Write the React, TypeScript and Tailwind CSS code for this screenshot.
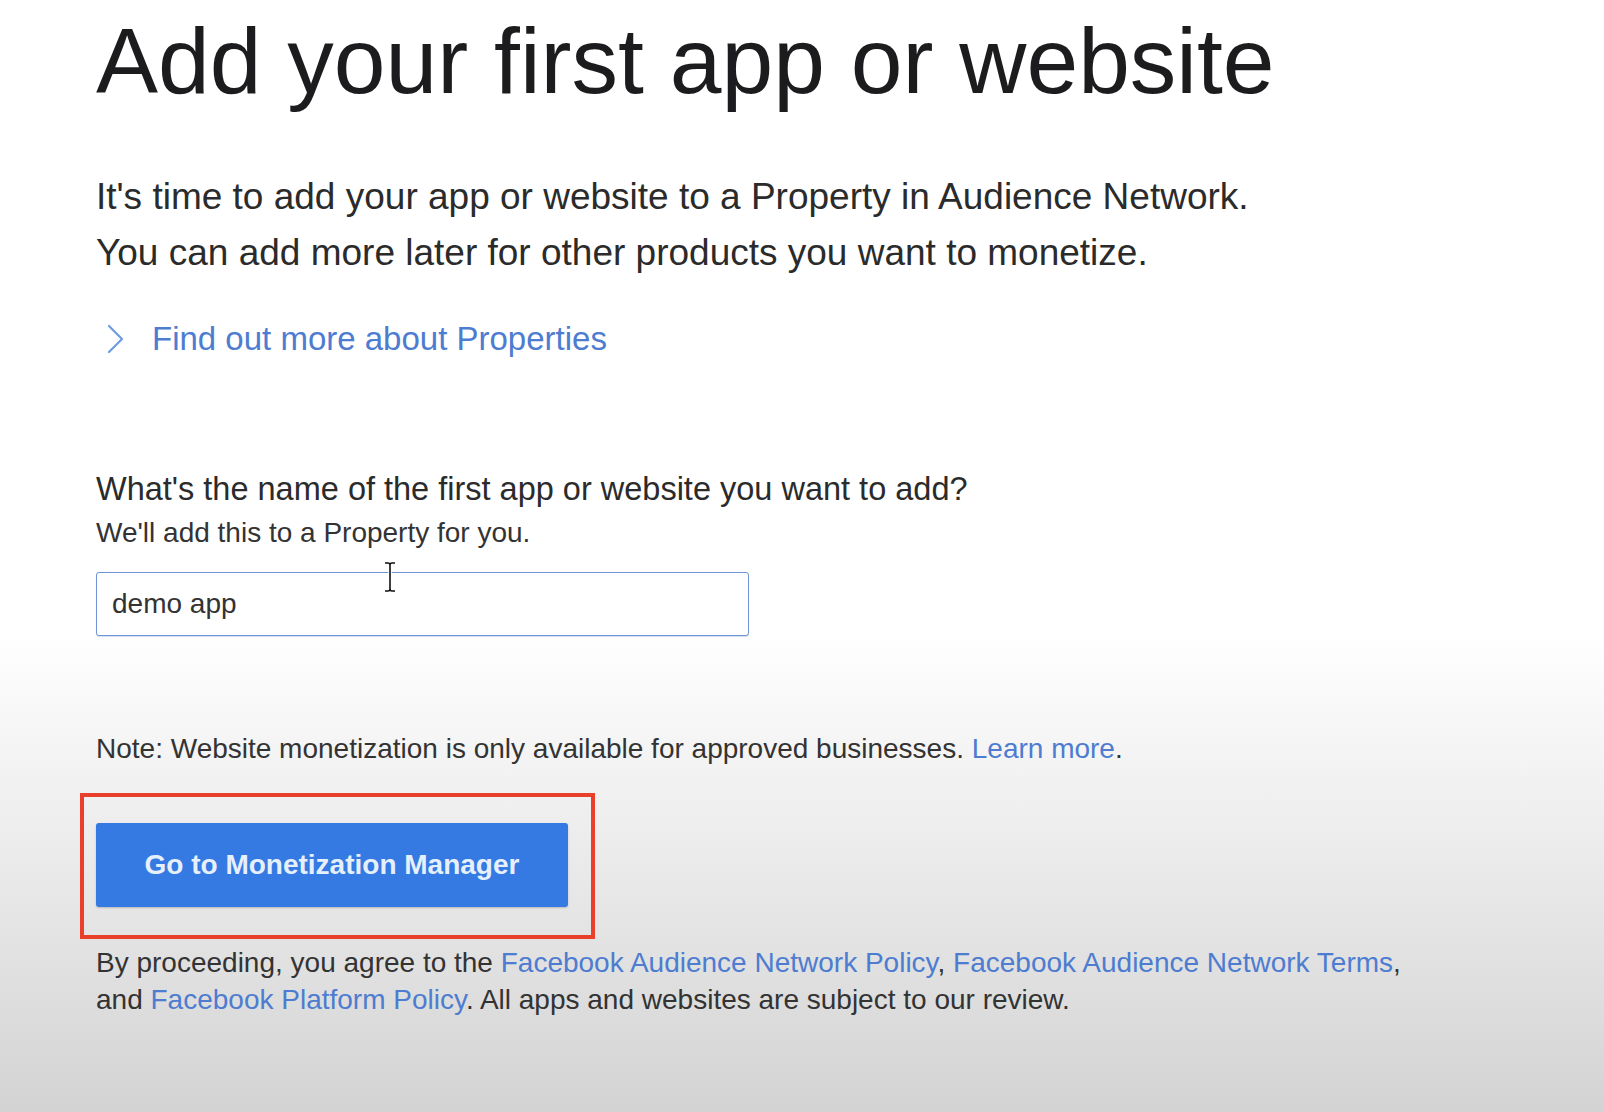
import React from "react";

const font = { fontFamily: '"Liberation Sans", Arial, sans-serif' };

export default function App() {
  return (
    <div
      className="w-full min-h-[1112px] bg-[linear-gradient(to_bottom,#ffffff_0%,#ffffff_57%,#d3d3d3_100%)] text-[#1d1d1f]"
      style={font}
    >
      <div className="pl-[96px] pt-[15px] flex flex-col items-start">
        <h1 className="text-[93px] leading-[93px] font-normal text-[#1c1c1e] whitespace-nowrap">
          Add your first app or website
        </h1>

        <p className="mt-[61px] text-[37px] leading-[56px] text-[#2b2b2b] whitespace-nowrap">
          It's time to add your app or website to a Property in Audience Network.
          <br />
          You can add more later for other products you want to monetize.
        </p>

        <a className="mt-[38px] flex items-center text-[33px] leading-[40px] text-[#4d7cd0] cursor-pointer">
          <svg
            width="18"
            height="30"
            viewBox="0 0 18 30"
            className="ml-[11px] mr-[27px]"
            fill="none"
          >
            <polyline
              points="2,2 15,15 2,28"
              stroke="#6e9ae0"
              strokeWidth="2.2"
              strokeLinecap="round"
              strokeLinejoin="round"
            />
          </svg>
          <span>Find out more about Properties</span>
        </a>

        <div className="mt-[110px] text-[32.5px] leading-[40px] text-[#2b2b2b] whitespace-nowrap">
          What's the name of the first app or website you want to add?
        </div>
        <div className="mt-[6px] text-[28px] leading-[36px] text-[#333333] whitespace-nowrap">
          We'll add this to a Property for you.
        </div>

        <div className="relative mt-[21px]">
          <div className="w-[653px] h-[64px] border border-[#6f95d6] rounded-[3px] bg-white pl-[15px] flex items-center shadow-[0_1px_1px_rgba(80,120,200,0.25)]">
            <span className="text-[28px] leading-[36px] text-[#333333]">demo app</span>
          </div>
          <svg
            width="14"
            height="32"
            viewBox="0 0 14 32"
            className="absolute left-[287px] top-[-11px]"
            fill="none"
          >
            <path
              d="M2 2 H5 Q7 2 7 4 Q7 2 9 2 H12 M7 4 V28 M2 30 H5 Q7 30 7 28 Q7 30 9 30 H12"
              stroke="#ffffff"
              strokeWidth="3.5"
            />
            <path
              d="M2 2 H5 Q7 2 7 4 Q7 2 9 2 H12 M7 4 V28 M2 30 H5 Q7 30 7 28 Q7 30 9 30 H12"
              stroke="#111111"
              strokeWidth="1.6"
            />
          </svg>
        </div>

        <div className="mt-[95px] text-[28px] leading-[36px] text-[#333333] whitespace-nowrap">
          Note: Website monetization is only available for approved businesses.{" "}
          <a className="text-[#4d7cd0] cursor-pointer">Learn more</a>.
        </div>

        <div className="mt-[26px] -ml-[16px] border-4 border-[#e8402b] pl-[12px] pr-[23px] pt-[26px] pb-[28px]">
          <button className="w-[472px] h-[84px] rounded-[3px] bg-[#3579e3] text-[#e6f0fb] text-[28px] font-bold leading-[36px] shadow-[0_1px_2px_rgba(0,0,0,0.2)]">
            Go to Monetization Manager
          </button>
        </div>

        <div className="mt-[5px] text-[28px] leading-[37px] text-[#333333] whitespace-nowrap">
          By proceeding, you agree to the{" "}
          <a className="text-[#4d7cd0] cursor-pointer">Facebook Audience Network Policy</a>,{" "}
          <a className="text-[#4d7cd0] cursor-pointer">Facebook Audience Network Terms</a>,
          <br />
          and <a className="text-[#4d7cd0] cursor-pointer">Facebook Platform Policy</a>. All apps and
          websites are subject to our review.
        </div>
      </div>
    </div>
  );
}
